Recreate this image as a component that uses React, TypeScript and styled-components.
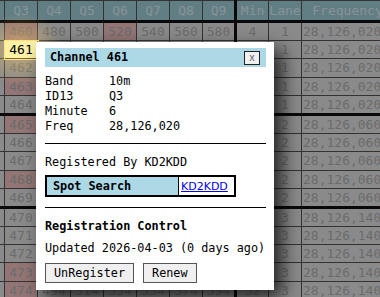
import React from 'react'
import styled, { createGlobalStyle, css } from 'styled-components'

const GlobalStyle = createGlobalStyle`
  html, body {
    margin: 0;
    padding: 0;
    background: #fff;
  }
  body {
    font-family: "DejaVu Sans Mono", monospace;
    overflow: hidden;
  }
`

const Page = styled.div`
  position: relative;
  width: 380px;
  height: 297px;
  overflow: hidden;
`

const Grid = styled.table`
  width: 422px;
  margin-left: -29px;
  border-collapse: collapse;
  table-layout: fixed;
  font-family: "DejaVu Sans Mono", monospace;
  font-size: 13px;
`

const HeadCell = styled.th<{ $thickRight?: boolean }>`
  height: 19px;
  padding: 0;
  background: #a2d2de;
  color: #e2f4f8;
  font-weight: normal;
  text-align: center;
  white-space: nowrap;
  overflow: hidden;
  border: 1px solid #555;
  border-bottom: 3px solid #111;
  ${({ $thickRight }) => $thickRight && css`border-right: 3px solid #111;`}
`

type Tone = 'gray' | 'red' | 'sel'

const Cell = styled.td<{ $tone?: Tone; $thickRight?: boolean; $thickBottom?: boolean; $left?: boolean }>`
  height: 17.2px;
  padding: 0 1px;
  line-height: 17px;
  text-align: ${({ $left }) => ($left ? 'left' : 'center')};
  white-space: nowrap;
  overflow: hidden;
  border: 1px solid #555;
  background: ${({ $tone }) => ($tone === 'red' ? '#f5c4c4' : '#e6e6e6')};
  color: #b4b4b4;
  ${({ $thickRight }) => $thickRight && css`border-right: 3px solid #111;`}
  ${({ $thickBottom }) => $thickBottom && css`border-bottom: 3px solid #111;`}
  ${({ $tone }) =>
    $tone === 'sel' &&
    css`
      position: relative;
      z-index: 2;
      background: #fff1a6;
      color: #000;
      outline: 1px solid #ffe27a;
    `}
`

/* dims the sheet, with a warm spotlight left round the picked cell */
const Backdrop = styled.div`
  position: absolute;
  inset: 0;
  z-index: 1;
  background:
    radial-gradient(ellipse 44px 36px at 20px 49px, rgba(255, 205, 100, 0.5), rgba(255, 205, 100, 0) 100%),
    rgba(0, 0, 0, 0.4);
`

const Dialog = styled.div`
  position: absolute;
  left: 36px;
  top: 42px;
  z-index: 3;
  width: 238px;
  box-sizing: border-box;
  padding: 6px 8px 7px 9px;
  background: #fff;
  color: #000;
  font-family: "DejaVu Sans Mono", monospace;
  font-size: 11.8px;
  line-height: 15px;
  white-space: nowrap;
  box-shadow: 8px 8px 18px rgba(0, 0, 0, 0.75);
`

const TitleBar = styled.div`
  height: 19px;
  display: flex;
  align-items: center;
  justify-content: space-between;
  padding: 0 6px 0 5px;
  background: #add8e6;
  font-weight: bold;
`

const CloseButton = styled.button`
  width: 16px;
  height: 14px;
  padding: 0;
  margin: 0;
  border: 1px solid #222;
  background: #f0f0f0;
  color: #666;
  font-family: "DejaVu Sans Mono", monospace;
  font-size: 10px;
  line-height: 10px;
`

const InfoGrid = styled.div`
  margin-top: 7px;
  display: grid;
  grid-template-columns: 64px 1fr;
`

const Rule = styled.div<{ $gap: number }>`
  margin-top: ${({ $gap }) => $gap}px;
  border-top: 1px solid #000;
`

const Line = styled.div<{ $gap: number; $bold?: boolean }>`
  margin-top: ${({ $gap }) => $gap}px;
  font-weight: ${({ $bold }) => ($bold ? 'bold' : 'normal')};
`

const SpotTable = styled.div`
  margin-top: 5px;
  width: 191px;
  box-sizing: border-box;
  display: flex;
  border: 2px solid #000;
  height: 22px;
`

const SpotLabel = styled.div`
  width: 132px;
  display: flex;
  align-items: center;
  padding-left: 6px;
  box-sizing: border-box;
  background: #add8e6;
  border-right: 1px solid #000;
  font-weight: bold;
`

const SpotLink = styled.a`
  flex: 1;
  display: flex;
  align-items: center;
  padding-left: 2px;
  font-family: "DejaVu Sans", sans-serif;
  font-size: 11px;
  color: #0000ee;
  text-decoration: underline;
`

const Buttons = styled.div`
  margin-top: 7px;
  display: flex;
  gap: 9px;
`

const Button = styled.button`
  height: 20px;
  padding: 0 8px;
  border: 1px solid #555;
  border-radius: 0;
  background: #f0f0f0;
  color: #000;
  font-family: "DejaVu Sans Mono", monospace;
  font-size: 11.8px;
`

const columns = ['Q2', 'Q3', 'Q4', 'Q5', 'Q6', 'Q7', 'Q8', 'Q9', 'Min', 'Lane', 'Frequency']
const widths = [33, 33, 33, 33, 33, 33, 33, 33, 33, 33, 92]
const redQ3 = [460, 463, 465, 468, 473, 474]
const freqs = ['28,126,020', '28,126,060', '28,126,140']

const rows = Array.from({ length: 16 }, (_, i) => 460 + i)

export default function App() {
  return (
    <Page>
      <GlobalStyle />
      <Grid>
        <colgroup>
          {widths.map((w, i) => (
            <col key={i} style={{ width: w }} />
          ))}
        </colgroup>
        <thead>
          <tr>
            {columns.map((c) => (
              <HeadCell key={c} $thickRight={c === 'Q9'}>
                {c}
              </HeadCell>
            ))}
          </tr>
        </thead>
        <tbody>
          {rows.map((n, i) => {
            const lane = Math.floor(i / 5) + 1
            const groupEnd = i % 5 === 4
            return (
              <tr key={n}>
                <Cell $thickBottom={groupEnd}>{n - 20}</Cell>
                <Cell
                  $tone={n === 461 ? 'sel' : redQ3.includes(n) ? 'red' : 'gray'}
                  $thickBottom={groupEnd}
                >
                  {n}
                </Cell>
                {[20, 40, 60, 80, 100, 120].map((d) => (
                  <Cell
                    key={d}
                    $tone={n === 460 && d === 60 ? 'red' : 'gray'}
                    $thickRight={d === 120}
                    $thickBottom={groupEnd}
                  >
                    {n + d}
                  </Cell>
                ))}
                <Cell $thickBottom={groupEnd}>{4 + i * 2}</Cell>
                <Cell $thickBottom={groupEnd}>{lane}</Cell>
                <Cell $left $thickBottom={groupEnd}>
                  {freqs[lane - 1] ?? '28,126,180'}
                </Cell>
              </tr>
            )
          })}
        </tbody>
      </Grid>
      <Backdrop />
      <Dialog>
        <TitleBar>
          <span>Channel 461</span>
          <CloseButton>x</CloseButton>
        </TitleBar>
        <InfoGrid>
          <span>Band</span>
          <span>10m</span>
          <span>ID13</span>
          <span>Q3</span>
          <span>Minute</span>
          <span>6</span>
          <span>Freq</span>
          <span>28,126,020</span>
        </InfoGrid>
        <Rule $gap={9} />
        <Line $gap={11}>Registered By KD2KDD</Line>
        <SpotTable>
          <SpotLabel>Spot Search</SpotLabel>
          <SpotLink href="#">KD2KDD</SpotLink>
        </SpotTable>
        <Rule $gap={10} />
        <Line $gap={11} $bold>
          Registration Control
        </Line>
        <Line $gap={7}>Updated 2026-04-03 (0 days ago)</Line>
        <Buttons>
          <Button>UnRegister</Button>
          <Button>Renew</Button>
        </Buttons>
      </Dialog>
    </Page>
  )
}
